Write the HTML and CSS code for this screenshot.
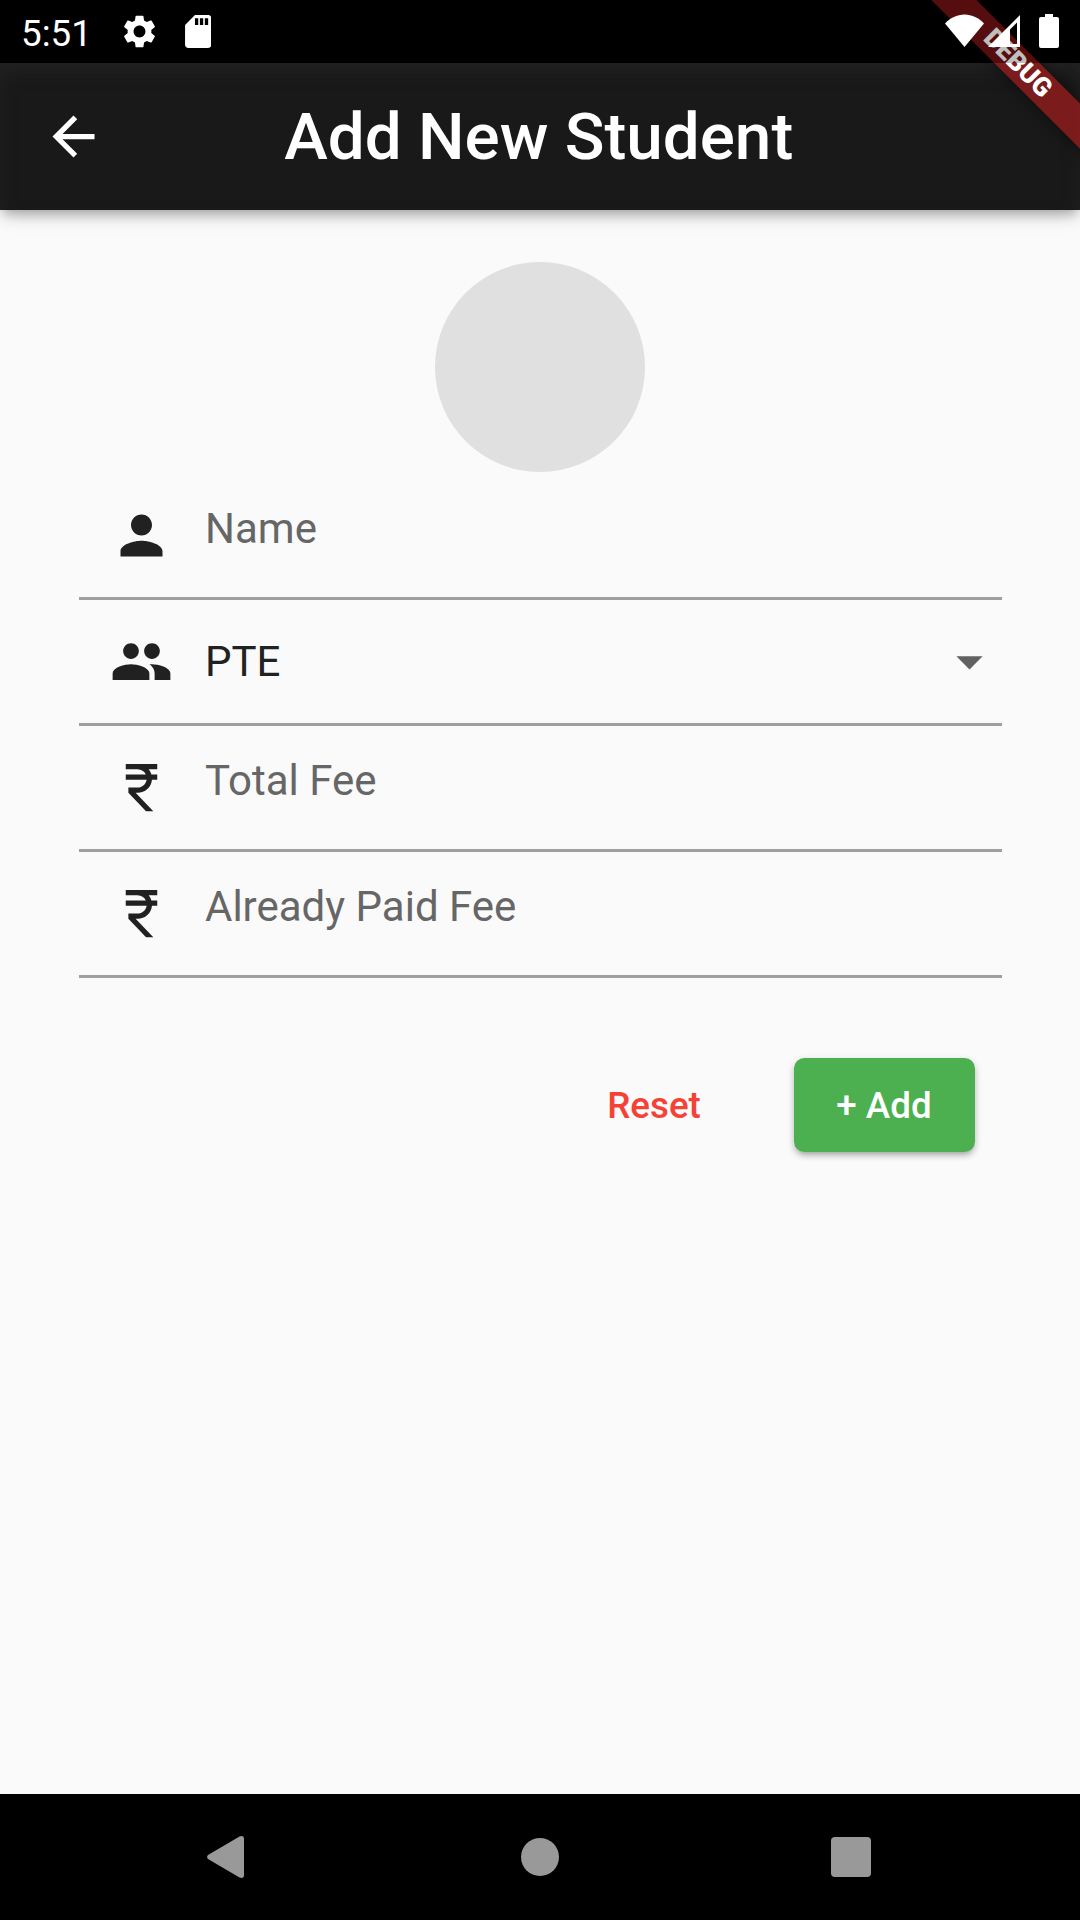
FILE: index.html
```html
<!DOCTYPE html>
<html lang="en">
<head>
<meta charset="utf-8">
<title>Add New Student</title>
<link rel="stylesheet" href="styles.css">
</head>
<body>
<div class="screen">
  <div class="status-bar">
    <span class="clock">5:51</span>
    <svg class="status-gear" viewBox="2 2 20 20"><path d="M19.14 12.94c.04-.3.06-.61.06-.94s-.02-.64-.07-.94l2.03-1.58c.18-.14.23-.41.12-.61l-1.92-3.32c-.12-.22-.37-.29-.59-.22l-2.39.96c-.5-.38-1.03-.7-1.62-.94l-.36-2.54c-.04-.24-.24-.41-.48-.41h-3.84c-.24 0-.43.17-.47.41l-.36 2.54c-.59.24-1.13.57-1.62.94l-2.39-.96c-.22-.08-.47 0-.59.22L2.74 8.87c-.12.21-.08.47.12.61l2.03 1.58c-.05.3-.09.63-.09.94s.02.64.07.94l-2.03 1.58c-.18.14-.23.41-.12.61l1.92 3.32c.12.22.37.29.59.22l2.39-.96c.5.38 1.03.7 1.62.94l.36 2.54c.05.24.24.41.48.41h3.84c.24 0 .44-.17.47-.41l.36-2.54c.59-.24 1.13-.56 1.62-.94l2.39.96c.22.08.47 0 .59-.22l1.92-3.32c.12-.22.07-.47-.12-.61l-2.01-1.58zM12 15.6c-1.98 0-3.6-1.62-3.6-3.6s1.62-3.6 3.6-3.6 3.6 1.62 3.6 3.6-1.62 3.6-3.6 3.6z"/></svg>
    <svg class="status-sd" viewBox="4 2 16 20"><path d="M18 2h-8L4.02 8 4 20c0 1.1.9 2 2 2h12c1.1 0 2-.9 2-2V4c0-1.1-.9-2-2-2zm-6 6h-2V4h2v4zm3 0h-2V4h2v4zm3 0h-2V4h2v4z"/></svg>
    <svg class="status-wifi" viewBox="0 0 39 33"><path d="M0 9.5C5 4 12 .5 19.500 .5S34 4 39 9.500L19.500 33z"/></svg>
    <svg class="status-signal" viewBox="0 0 32 32"><path fill-rule="evenodd" d="M0 32L32 0v32zM22 14.500V29h7V7.500z"/></svg>
    <svg class="status-battery" viewBox="0 0 20 34"><path d="M6 0h8v3h4q2 0 2 2v27q0 2-2 2H2q-2 0-2-2V5q0-2 2-2h4z"/></svg>
  </div>
  <div class="debug-ribbon">DEBUG</div>

  <header class="app-bar">
    <svg class="icon back" viewBox="0 0 24 24"><path d="M20 11H7.830l5.590-5.590L12 4l-8 8 8 8 1.410-1.410L7.830 13H20v-2z"/></svg>
    <h1 class="title">Add New Student</h1>
  </header>

  <main class="content">
    <div class="avatar"></div>
    <div class="form">
      <div class="field">
        <svg class="icon" viewBox="0 0 24 24"><path d="M12 12c2.210 0 4-1.790 4-4s-1.790-4-4-4-4 1.790-4 4 1.790 4 4 4zm0 2c-2.670 0-8 1.340-8 4v2h16v-2c0-2.660-5.330-4-8-4z"/></svg>
        <span class="label">Name</span>
      </div>
      <div class="field">
        <svg class="icon" viewBox="0 0 24 24"><path d="M16 11c1.660 0 2.990-1.340 2.990-3S17.660 5 16 5c-1.660 0-3 1.340-3 3s1.340 3 3 3zm-8 0c1.660 0 2.990-1.340 2.990-3S9.660 5 8 5C6.340 5 5 6.340 5 8s1.340 3 3 3zm0 2c-2.330 0-7 1.170-7 3.500V19h14v-2.500c0-2.330-4.670-3.500-7-3.500zm8 0c-.29 0-.62.020-.97.050 1.160.84 1.970 1.970 1.970 3.450V19h6v-2.500c0-2.330-4.670-3.500-7-3.500z"/></svg>
        <span class="label selected">PTE</span>
        <svg class="icon caret" viewBox="0 0 24 24"><path d="M7 10l5 5 5-5z"/></svg>
      </div>
      <div class="field">
        <svg class="icon" viewBox="0 0 24 24"><path d="M13.660 7c-.56-1.180-1.760-2-3.160-2H6V3h12v2h-3.260c.48.58.84 1.260 1.050 2H18v2h-2.020c-.25 2.800-2.610 5-5.480 5h-.73l6.730 7h-2.770L7 14v-2h3.500c1.760 0 3.220-1.300 3.460-3H6V7h7.660z"/></svg>
        <span class="label">Total Fee</span>
      </div>
      <div class="field">
        <svg class="icon" viewBox="0 0 24 24"><path d="M13.660 7c-.56-1.180-1.760-2-3.160-2H6V3h12v2h-3.260c.48.58.84 1.260 1.050 2H18v2h-2.020c-.25 2.800-2.610 5-5.480 5h-.73l6.730 7h-2.770L7 14v-2h3.500c1.760 0 3.220-1.300 3.460-3H6V7h7.660z"/></svg>
        <span class="label">Already Paid Fee</span>
      </div>
    </div>
    <div class="actions">
      <button class="btn reset">Reset</button>
      <button class="btn add">+ Add</button>
    </div>
  </main>

  <nav class="nav-bar">
    <svg class="nav-back" viewBox="0 0 37 42"><path d="M1 19L32.500 .5Q37-1 37 3v36Q37 43 32.500 41.500L1 23Q-.8 21 1 19z"/></svg>
    <div class="nav-home"></div>
    <div class="nav-recent"></div>
  </nav>
</div>
</body>
</html>
```
FILE: styles.css
```css
* { box-sizing: border-box; }

body {
  margin: 0;
  background: #000;
  font-family: Roboto, sans-serif;
}

.screen {
  position: relative;
  display: flex;
  flex-direction: column;
  width: 1080px;
  height: 1920px;
  overflow: hidden;
}

svg { display: block; flex: none; }

.icon { width: 63px; height: 63px; fill: #212121; }

/* Status bar: translucent scrim that also tints the ribbon */
.status-bar {
  position: relative;
  z-index: 4;
  flex: none;
  display: flex;
  align-items: flex-start;
  height: 63px;
  padding: 14px 21px 0;
  background: rgba(0, 0, 0, .25);
  fill: #fff;
}

.clock {
  width: 102px;
  margin-top: -2px;
  color: #fff;
  font-size: 36.750px;
  line-height: 43px;
}

.status-gear { width: 33px; height: 33px; margin-top: 1px; }
.status-sd { width: 26.500px; height: 33px; margin: 1px auto 0 28.500px; }
.status-wifi { width: 39px; height: 33px; }
.status-signal { width: 32px; height: 32px; margin: 1px 19px 0 4px; }
.status-battery { width: 20px; height: 34px; }

.debug-ribbon {
  position: absolute;
  z-index: 3;
  left: 877px;
  top: 47.250px;
  width: 280px;
  height: 31.500px;
  padding-left: 2px;
  transform: rotate(45deg);
  background: rgba(183, 28, 28, .627);
  box-shadow: 0 0 16px rgba(0, 0, 0, .5);
  color: #fff;
  font-size: 26.250px;
  font-weight: 900;
  line-height: 31.500px;
  text-align: center;
}

.app-bar {
  position: relative;
  z-index: 2;
  flex: none;
  display: flex;
  align-items: center;
  height: 147px;
  padding: 0 42px;
  background: #191919;
  box-shadow:
    inset 0 9px 16px #222,
    0 5px 10px -3px rgba(0, 0, 0, .2),
    0 10px 13px -3px rgba(0, 0, 0, .14),
    0 3px 26px -3px rgba(0, 0, 0, .12);
}

.back { fill: #fff; }

.title {
  flex: 1;
  margin: 0 65.500px 0 0;
  color: #fff;
  font-size: 65.625px;
  font-weight: 500;
  line-height: 77px;
  text-align: center;
  white-space: nowrap;
}

.content {
  flex: 1;
  display: flex;
  flex-direction: column;
  padding: 52px 78px 0 79px;
  background: #fafafa;
}

.avatar {
  flex: none;
  align-self: center;
  width: 210px;
  height: 210px;
  margin-right: 1px;
  border-radius: 50%;
  background: #e0e0e0;
}

.form { margin-top: 2px; }

.field {
  display: flex;
  align-items: flex-start;
  height: 126px;
  padding: 30px 0 0 31px;
  border-bottom: 3px solid #9f9f9f;
}

.label {
  flex: 1;
  margin: 0 0 0 32px;
  color: #666;
  font-size: 42px;
  line-height: 49px;
}

.selected { margin-top: 7px; color: #212121; }
.caret { margin-right: 1px; fill: #616161; }

.actions {
  display: flex;
  justify-content: flex-end;
  margin-top: 80px;
  padding-right: 27px;
}

.btn {
  height: 94px;
  border: 0;
  border-radius: 10.500px;
  font: 500 36.750px/43px Roboto, sans-serif;
}

.reset {
  width: 178px;
  margin-right: 51px;
  background: none;
  color: #f44336;
}

.add {
  width: 181px;
  padding: 0 7px 0 6px;
  background: #4caf50;
  box-shadow:
    0 5px 5px -5px rgba(0, 0, 0, .2),
    0 4px 6px rgba(0, 0, 0, .18),
    0 2px 8px rgba(0, 0, 0, .1);
  color: #fff;
}

.nav-bar {
  flex: none;
  display: flex;
  align-items: center;
  justify-content: space-between;
  height: 126px;
  padding: 0 209px 0 207px;
  background: #000;
}

.nav-back { width: 37px; height: 42px; fill: #999; }

.nav-home {
  width: 38px;
  height: 38px;
  margin-left: 5px;
  border-radius: 50%;
  background: #999;
}

.nav-recent {
  width: 40px;
  height: 40px;
  border-radius: 4px;
  background: #999;
}
```
